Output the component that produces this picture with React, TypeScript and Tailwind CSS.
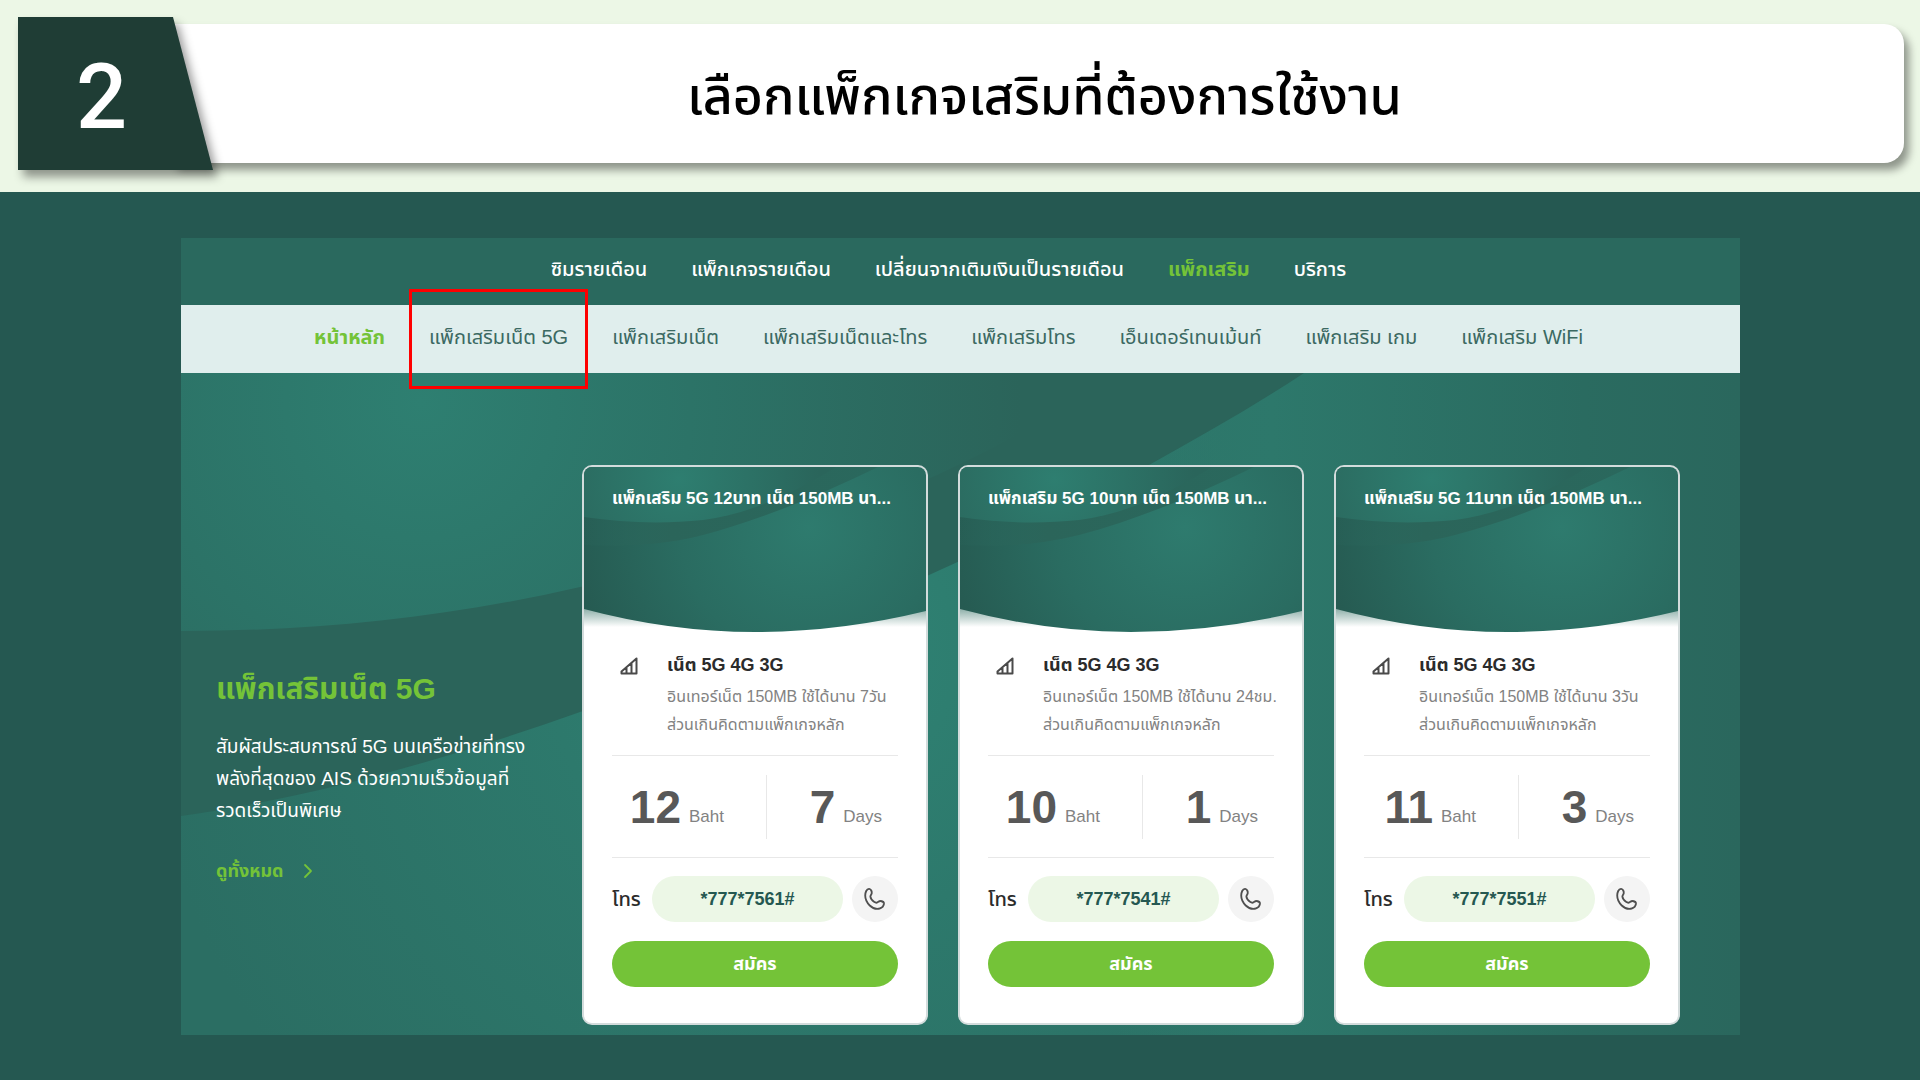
import { ChevronRight } from 'lucide-react';

const mainMenu = [
  { label: 'ซิมรายเดือน' },
  { label: 'แพ็กเกจรายเดือน' },
  { label: 'เปลี่ยนจากเติมเงินเป็นรายเดือน' },
  { label: 'แพ็กเสริม', active: true },
  { label: 'บริการ' },
];

const subMenu = [
  { label: 'หน้าหลัก', active: true },
  { label: 'แพ็กเสริมเน็ต 5G', marked: true },
  { label: 'แพ็กเสริมเน็ต' },
  { label: 'แพ็กเสริมเน็ตและโทร' },
  { label: 'แพ็กเสริมโทร' },
  { label: 'เอ็นเตอร์เทนเม้นท์' },
  { label: 'แพ็กเสริม เกม' },
  { label: 'แพ็กเสริม WiFi' },
];

const packages = [
  { id: 'p12', title: 'แพ็กเสริม 5G 12บาท เน็ต 150MB นา...', detail: 'อินเทอร์เน็ต 150MB ใช้ได้นาน 7วัน', price: 12, days: 7, code: '*777*7561#' },
  { id: 'p10', title: 'แพ็กเสริม 5G 10บาท เน็ต 150MB นา...', detail: 'อินเทอร์เน็ต 150MB ใช้ได้นาน 24ชม.', price: 10, days: 1, code: '*777*7541#' },
  { id: 'p11', title: 'แพ็กเสริม 5G 11บาท เน็ต 150MB นา...', detail: 'อินเทอร์เน็ต 150MB ใช้ได้นาน 3วัน', price: 11, days: 3, code: '*777*7551#' },
];

type Package = (typeof packages)[number];

function StepHeader() {
  return (
    <header className="flex h-48 items-start bg-[#ecf7e6] pt-[17px] pr-4 pl-[18px]">
      <div className="relative z-10 flex h-[153px] w-[195px] shrink-0 items-center pl-[58px] drop-shadow-[5px_7px_5px_rgba(0,0,0,0.4)]">
        <svg className="absolute inset-0 size-full" viewBox="0 0 195 153" preserveAspectRatio="none" aria-hidden="true">
          <path d="M0 0H155L195 153H0Z" fill="#1f3d35" />
        </svg>
        <span className="relative pt-2 font-['Roboto',sans-serif] text-[90px] leading-none font-medium text-white">2</span>
      </div>
      <div className="mt-[7px] -ml-10 flex h-[139px] flex-1 items-center justify-center rounded-r-[20px] bg-white pl-3 shadow-[5px_7px_8px_rgba(0,0,0,0.4)]">
        <h1 className="pt-1 text-[52px] leading-[72px] font-medium whitespace-nowrap text-black">เลือกแพ็กเกจเสริมที่ต้องการใช้งาน</h1>
      </div>
    </header>
  );
}

function HeroBackground() {
  return (
    <svg className="absolute inset-0 size-full" viewBox="0 0 1559 662" preserveAspectRatio="none" aria-hidden="true">
      <defs>
        <radialGradient id="hero-top" gradientUnits="userSpaceOnUse" cx="240" cy="30" r="600">
          <stop offset="0" stopColor="#2e7f71" />
          <stop offset="0.45" stopColor="#2c7367" />
          <stop offset="1" stopColor="#2b645a" />
        </radialGradient>
        <radialGradient id="hero-mid" gradientUnits="userSpaceOnUse" cx="640" cy="280" r="680">
          <stop offset="0" stopColor="#2f8374" />
          <stop offset="0.4" stopColor="#2d796c" />
          <stop offset="1" stopColor="#2b6e63" />
        </radialGradient>
        <linearGradient id="hero-right" x1="0" x2="1">
          <stop offset="0.6" stopColor="#2e7a6d" stopOpacity="0" />
          <stop offset="0.7" stopColor="#2d786b" />
          <stop offset="0.9" stopColor="#2a6b60" />
          <stop offset="1" stopColor="#2a675d" />
        </linearGradient>
      </defs>
      <rect width="1559" height="662" fill="url(#hero-mid)" />
      <rect width="1559" height="662" fill="url(#hero-right)" />
      <path d="M0 0H1123C1075 32 1022 62 968 92C900 130 830 165 748 202C640 255 520 303 399 339C270 385 130 425 0 443Z" fill="#2b645a" />
      <path d="M0 0H937C800 95 620 170 399 214C260 246 130 258 0 258Z" fill="url(#hero-top)" />
    </svg>
  );
}

function CardCover({ id }: { id: string }) {
  return (
    <svg className="absolute inset-0 size-full" viewBox="0 0 342 166" preserveAspectRatio="none" aria-hidden="true">
      <defs>
        <radialGradient id={`${id}-base`} gradientUnits="userSpaceOnUse" cx="225" cy="60" r="235">
          <stop offset="0" stopColor="#2e7b6e" />
          <stop offset="0.55" stopColor="#2a6c61" />
          <stop offset="1" stopColor="#265b52" />
        </radialGradient>
        <radialGradient id={`${id}-top`} gradientUnits="userSpaceOnUse" cx="95" cy="12" r="140">
          <stop offset="0" stopColor="#2e7e70" />
          <stop offset="1" stopColor="#2a655b" />
        </radialGradient>
        <linearGradient id={`${id}-band`} x1="0" x2="1">
          <stop offset="0" stopColor="#29655b" stopOpacity="0.2" />
          <stop offset="0.3" stopColor="#2b655a" />
          <stop offset="1" stopColor="#2a685d" />
        </linearGradient>
        <linearGradient id={`${id}-shade`} x1="0" x2="0" y1="0" y2="1">
          <stop offset="0" stopColor="#8fb0aa" />
          <stop offset="0.75" stopColor="#ffffff" />
        </linearGradient>
      </defs>
      <rect y="142" width="342" height="24" fill={`url(#${id}-shade)`} />
      <path d="M0 0H342V144Q256 165 171 165Q86 165 0 142Z" fill={`url(#${id}-base)`} />
      <path d="M0 0H294C240 26 180 52 119 68C80 78 40 80 0 78Z" fill={`url(#${id}-band)`} />
      <path d="M0 0H252C220 20 170 47 119 53C80 57 40 56 0 50Z" fill={`url(#${id}-top)`} />
    </svg>
  );
}

function SignalIcon() {
  return (
    <svg className="size-[18px]" viewBox="0 0 18 18" fill="none" stroke="#4a4a4a" strokeWidth="2" strokeLinejoin="round" aria-hidden="true">
      <path d="M16.5 1.5V16.5H1.500V14.500ZM6.500 11V16M11.500 6.500V16" />
    </svg>
  );
}

function PhoneIcon() {
  return (
    <svg className="size-[24px]" viewBox="0 0 24 26" fill="none" stroke="#4f4f4f" strokeWidth="2" strokeLinejoin="round" aria-hidden="true">
      <path d="M5.700 2C7.600 2.200 8.900 5 8.400 7C8 8.600 6.800 9 7 10.500C7.300 12.600 9.300 15.100 11.300 16.300C12.500 17.100 13.800 17.200 14.800 16.600C16 15.900 16.700 14.900 18.200 15.200C20 15.500 21.900 16.700 21.700 18.300C21.400 20.300 19.400 22.600 17 23.300C13.500 24.200 9.300 22.900 6.300 20C3.200 17 1.400 13.200 1.400 9.300C1.400 6 2.800 1.700 5.700 2Z" />
    </svg>
  );
}

function PackageCard({ pack }: { pack: Package }) {
  return (
    <article className="w-[346px] shrink-0 overflow-hidden rounded-[10px] border-2 border-[#d3dcdc] bg-white pb-9">
      <div className="relative h-[166px] px-7 pt-[18px]">
        <CardCover id={pack.id} />
        <h3 className="relative text-[17px] leading-7 font-bold whitespace-nowrap text-white">{pack.title}</h3>
      </div>

      <div className="px-7">
        {/* Network and detail */}
        <div className="flex h-[123px] border-b border-[#e8e8e8] pt-4 pl-2">
          <div className="w-[47px] shrink-0 pt-2">
            <SignalIcon />
          </div>
          <div className="whitespace-nowrap">
            <h4 className="text-lg leading-8 font-bold text-[#2b2b2b]">เน็ต 5G 4G 3G</h4>
            <p className="pt-0.5 text-base leading-7 text-[#828282]">{pack.detail}</p>
            <p className="text-base leading-7 text-[#828282]">ส่วนเกินคิดตามแพ็กเกจหลัก</p>
          </div>
        </div>

        {/* Price and duration */}
        <div className="flex h-[102px] items-center border-b border-[#e8e8e8]">
          <div className="flex h-16 w-[155px] items-center justify-end gap-2 border-r border-[#e8e8e8] pr-[42px]">
            <span className="text-[46px] leading-none font-bold text-[#585858]">{pack.price}</span>
            <span className="pt-5 text-[17px] leading-6 text-[#828282]">Baht</span>
          </div>
          <div className="flex flex-1 items-center justify-end gap-2 pr-4">
            <span className="text-[46px] leading-none font-bold text-[#585858]">{pack.days}</span>
            <span className="pt-5 text-[17px] leading-6 text-[#828282]">Days</span>
          </div>
        </div>

        <div className="mt-[18px] flex items-center">
          <span className="w-10 shrink-0 text-xl font-medium text-[#2b2b2b]">โทร</span>
          <div className="flex h-[46px] flex-1 items-center justify-center rounded-full bg-[#ecf7e6] text-lg font-bold text-[#255851]">{pack.code}</div>
          <button type="button" aria-label="โทร" className="ml-[9px] flex size-[46px] shrink-0 items-center justify-center rounded-full bg-[#f4f4f4]">
            <PhoneIcon />
          </button>
        </div>
        <button type="button" className="mt-[19px] h-[46px] w-full rounded-full bg-[#74c338] text-lg font-bold text-white">
          สมัคร
        </button>
      </div>
    </article>
  );
}

export default function App() {
  return (
    <div className="min-h-screen bg-[#255851] font-['Liberation_Sans','Noto_Sans_Thai','Noto_Sans',sans-serif]">
      <StepHeader />

      <main className="pt-[46px] pr-[180px] pb-[45px] pl-[181px]">
        <nav className="flex h-[67px] items-center justify-center gap-11 bg-[#2a695e] pr-6 pb-1.5 text-xl whitespace-nowrap">
          {mainMenu.map((item) => (
            <a key={item.label} href="#" className={item.active ? 'font-bold text-[#74c338]' : 'font-medium text-white'}>
              {item.label}
            </a>
          ))}
        </nav>

        <nav className="flex h-[68px] items-center justify-center gap-11 bg-[#e0eeed] pr-6 pb-1 text-xl whitespace-nowrap">
          {subMenu.map((item) => (
            <a key={item.label} href="#" className={item.active ? 'font-bold text-[#74c338]' : 'relative text-[#3b6962]'}>
              {item.label}
              {item.marked && <span className="absolute -inset-x-5 -top-[34px] -bottom-[38px] z-10 border-3 border-[#fe0000]" />}
            </a>
          ))}
        </nav>

        <section className="relative flex gap-[30px] pt-[92px] pr-[60px] pb-[10px] pl-[35px]">
          <HeroBackground />
          <div className="relative flex-1 pt-[200px]">
            <h2 className="text-[30px] leading-[48px] font-bold text-[#74c338]">แพ็กเสริมเน็ต 5G</h2>
            <p className="mt-[18px] text-[19px] leading-8 whitespace-nowrap text-white">
              สัมผัสประสบการณ์ 5G บนเครือข่ายที่ทรง
              <br />
              พลังที่สุดของ AIS ด้วยความเร็วข้อมูลที่
              <br />
              รวดเร็วเป็นพิเศษ
            </p>
            <a href="#" className="mt-7 flex items-center gap-3 text-lg leading-8 font-bold text-[#74c338]">
              ดูทั้งหมด
              <ChevronRight className="size-6" strokeWidth={1.8} />
            </a>
          </div>
          <div className="relative flex gap-[30px]">
            {packages.map((pack) => (
              <PackageCard key={pack.id} pack={pack} />
            ))}
          </div>
        </section>
      </main>
    </div>
  );
}
